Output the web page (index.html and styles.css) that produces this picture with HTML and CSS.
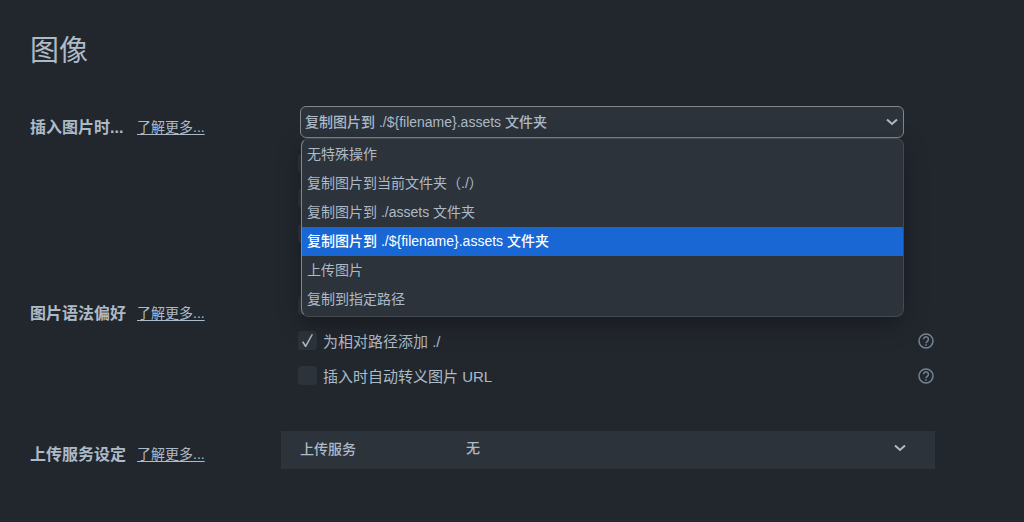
FILE: index.html
```html
<!DOCTYPE html>
<html lang="zh-CN">
    <head>
        <meta charset="UTF-8">
        <meta name="viewport" content="width=device-width, initial-scale=1">
        <title>图像</title>
        <link rel="stylesheet" href="styles.css">
    </head>
    <body>
        <main class="page">
            <h1>图像</h1>

            <!-- Insert rules -->
            <section class="setting insert">
                <div class="heading">
                    <label class="name" for="insertAction">插入图片时...</label>
                    <a href="#insert">了解更多...</a>
                </div>
                <div class="content">
                    <div class="dropdown">
                        <div class="select-box open">
                            <select id="insertAction">
                                <option>无特殊操作</option>
                                <option>复制图片到当前文件夹（./）</option>
                                <option>复制图片到 ./assets 文件夹</option>
                                <option selected>复制图片到 ./${filename}.assets 文件夹</option>
                                <option>上传图片</option>
                                <option>复制到指定路径</option>
                            </select>
                            <svg class="arrow" viewBox="0 0 12 8"><path d="M1 1.500 6 6l5-4.500"/></svg>
                        </div>
                        <ul class="menu" role="listbox" aria-label="插入图片时">
                            <li role="option">无特殊操作</li>
                            <li role="option">复制图片到当前文件夹（./）</li>
                            <li role="option">复制图片到 ./assets 文件夹</li>
                            <li role="option" class="active" aria-selected="true">复制图片到 ./${filename}.assets 文件夹</li>
                            <li role="option">上传图片</li>
                            <li role="option">复制到指定路径</li>
                        </ul>
                    </div>
                    <div class="check"><input type="checkbox" aria-label="本地图片"></div>
                    <div class="check"><input type="checkbox" aria-label="网络图片"></div>
                    <div class="check"><input type="checkbox" aria-label="自动上传图片"></div>
                </div>
            </section>

            <!-- Image syntax -->
            <section class="setting syntax">
                <div class="heading">
                    <h2 class="name">图片语法偏好</h2>
                    <a href="#syntax">了解更多...</a>
                </div>
                <div class="content">
                    <div class="check"><input type="checkbox" aria-label="相对路径"></div>
                    <div class="check">
                        <input type="checkbox" id="addDot" checked>
                        <label for="addDot">为相对路径添加 ./</label>
                        <button class="help" type="button" aria-label="帮助">
                            <svg viewBox="0 0 16 16"><circle cx="8" cy="8" r="7"/><path d="M5.600 6.300a2.400 2.400 0 1 1 3.700 2C8.400 8.900 8 9.200 8 10.200"/><path d="M8 11.200v1.500"/></svg>
                        </button>
                    </div>
                    <div class="check">
                        <input type="checkbox" id="escapeUrl">
                        <label for="escapeUrl">插入时自动转义图片 URL</label>
                        <button class="help" type="button" aria-label="帮助">
                            <svg viewBox="0 0 16 16"><circle cx="8" cy="8" r="7"/><path d="M5.600 6.300a2.400 2.400 0 1 1 3.700 2C8.400 8.900 8 9.200 8 10.200"/><path d="M8 11.200v1.500"/></svg>
                        </button>
                    </div>
                </div>
            </section>

            <!-- Upload service -->
            <section class="setting upload">
                <div class="heading">
                    <h2 class="name">上传服务设定</h2>
                    <a href="#upload">了解更多...</a>
                </div>
                <div class="panel">
                    <label for="uploader">上传服务</label>
                    <div class="select-box">
                        <select id="uploader">
                            <option>无</option>
                        </select>
                        <svg class="arrow" viewBox="0 0 12 8"><path d="M1 1.500 6 6l5-4.500"/></svg>
                    </div>
                </div>
            </section>
        </main>
    </body>
</html>
```

FILE: styles.css
```css
*{
    box-sizing: border-box;
}
body{
    margin: 0;
    background-color: #22272e;
    color: #adbac7;
    font-family: "Liberation Sans", "Noto Sans CJK SC", sans-serif;
    font-size: 15px;
}
.page{
    padding: 29px 89px 48px 30px;
}
h1{
    margin: 0 0 33px;
    font-size: 29px;
    font-weight: normal;
    line-height: 44px;
}
.setting{
    display: grid;
    grid-template-columns: 251px 1fr;
}
.heading{
    display: grid;
    grid-template-columns: 97px auto;
    gap: 10px;
    align-items: center;
    align-self: start;
    justify-content: start;
    height: 40px;
}
.name{
    margin: 0;
    font-size: 16px;
    font-weight: bold;
    white-space: nowrap;
}
a{
    color: #adbac7;
    font-size: 14px;
    text-underline-offset: 2px;
}
.content{
    padding-left: 17px;
}

/* drop-downs */
.dropdown{
    position: relative;
    margin: 0 31px 8px 2px;
}
.select-box{
    display: grid;
    align-items: center;
    background-color: #2d333b;
    border: 1px solid transparent;
    border-radius: 6px;
}
.select-box.open{
    border-color: #80868d;
}
.select-box select, .arrow{
    grid-area: 1 / 1;
}
select{
    width: 100%;
    height: 30px;
    padding: 0 4px;
    appearance: none;
    background: none;
    border: none;
    outline: none;
    color: #adbac7;
    font-family: inherit;
    font-size: 14px;
    font-weight: 500;
}
.arrow{
    justify-self: end;
    width: 12px;
    height: 8px;
    margin-right: 5px;
    fill: none;
    stroke: #adbac7;
    stroke-width: 2;
    pointer-events: none;
}
.menu{
    position: absolute;
    top: 100%;
    left: 1px;
    right: 0;
    z-index: 1;
    margin: 0;
    padding: 1px 0 2px;
    list-style: none;
    background-color: #2d333b;
    border: 1px solid #444a50;
    border-left-color: #80868d;
    border-radius: 8px;
    box-shadow: 0 8px 24px rgba(0,0,0, 0.3);
    font-size: 14px;
    line-height: 29px;
}
.menu li{
    padding: 0 5px;
    white-space: nowrap;
}
.menu .active{
    background-color: #1967d4;
    color: #fff;
    font-weight: 500;
}

/* tick boxes */
.check{
    display: flex;
    align-items: center;
    gap: 6px;
    height: 35px;
}
input[type="checkbox"]{
    display: grid;
    place-items: center;
    width: 19px;
    height: 19px;
    margin: 0;
    appearance: none;
    background-color: #2d333b;
    border-radius: 4px;
}
input[type="checkbox"]:checked::before{
    content: "";
    width: 11px;
    height: 13px;
    background-color: #adbac7;
    clip-path: polygon(0 62%, 12% 56%, 33% 82%, 88% 0, 100% 4%, 38% 100%, 28% 100%);
}
.help{
    width: 16px;
    height: 16px;
    margin-left: auto;
    margin-right: 1px;
    padding: 0;
    background: none;
    border: none;
}
.help svg{
    display: block;
    fill: none;
    stroke: #768390;
    stroke-width: 1.5;
}

.syntax{
    margin-top: 37px;
}
.syntax .heading{
    height: 47px;
}
.upload{
    margin-top: 38px;
}
.upload .heading{
    height: 44px;
}
.panel{
    display: grid;
    grid-template-columns: 160px 1fr;
    gap: 1px;
    align-items: center;
    align-self: start;
    padding: 1px 23px 5px 19px;
    background-color: #2d333b;
    font-size: 14px;
    font-weight: 500;
}
```
